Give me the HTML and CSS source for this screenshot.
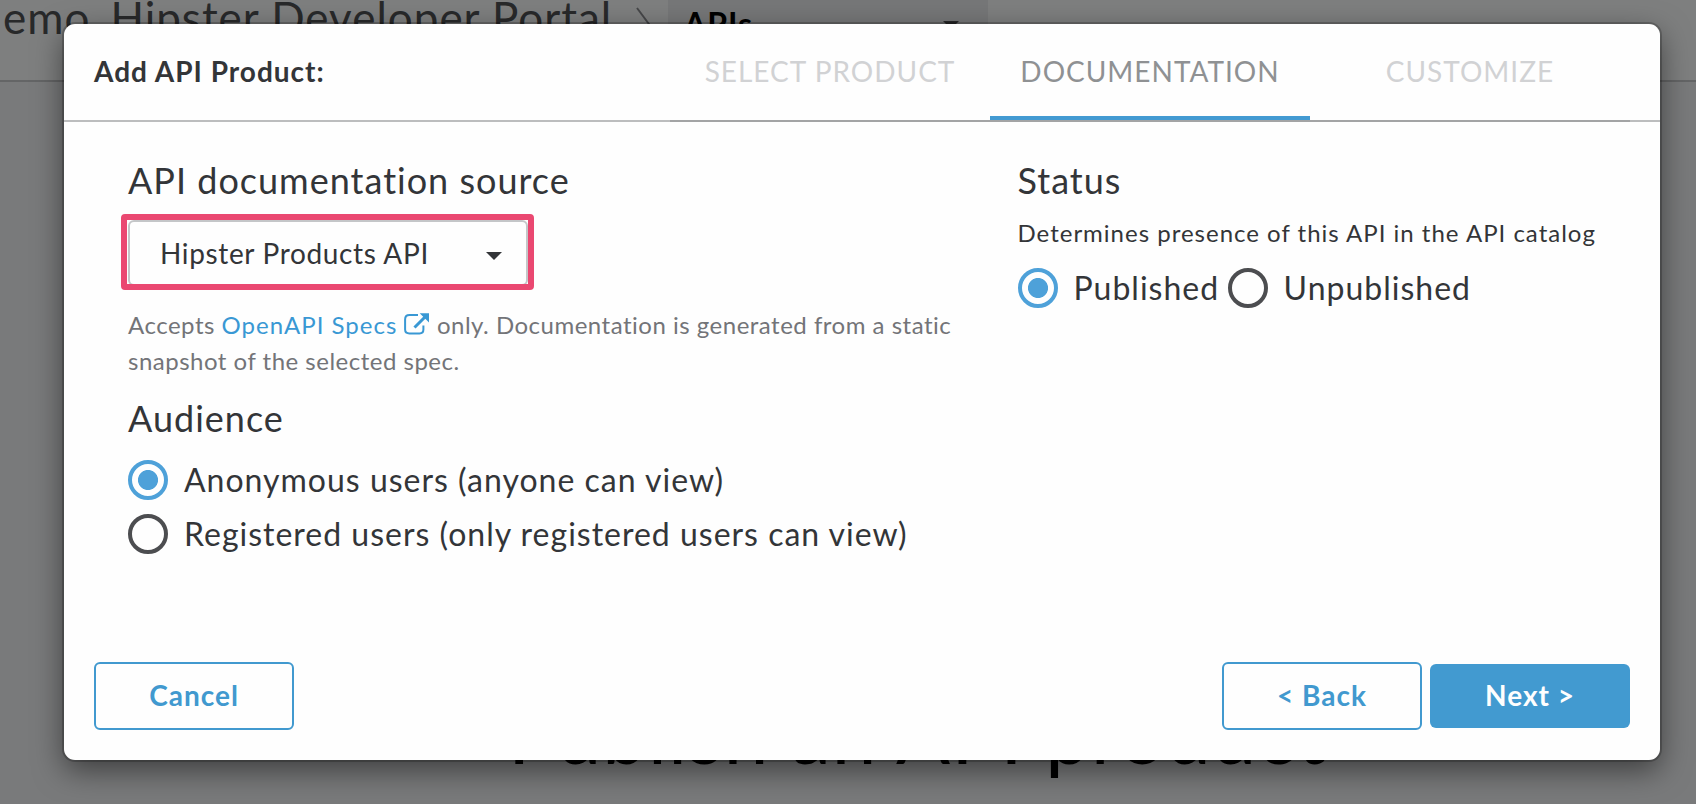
FILE: index.html
```
<!DOCTYPE html>
<html lang="en">
<head>
<meta charset="utf-8">
<title>Add API Product</title>
<link rel="stylesheet" href="styles.css">
</head>
<body>
<div class="page">
  <header class="topbar">
    <div class="crumb"><span>emo</span><span>Hipster Developer Portal</span></div>
    <svg class="crumb-sep" width="16" height="60" viewBox="0 0 16 60"><path d="M1 8 L14 25.500 L1 44" fill="none" stroke="#8d8f92" stroke-width="2"/></svg>
    <div class="section-picker"><span>APIs</span><i class="caret"></i></div>
  </header>
  <main class="content"><h1 class="headline">Publish an API product</h1></main>
</div>
<div class="backdrop">
  <section class="modal">
    <div class="modal-head">
      <h2 class="modal-title">Add API Product:</h2>
      <nav class="tabs">
        <span class="tab">SELECT PRODUCT</span>
        <span class="tab active">DOCUMENTATION</span>
        <span class="tab">CUSTOMIZE</span>
      </nav>
    </div>
    <div class="modal-body">
      <div class="col-main">
        <h3 class="label">API documentation source</h3>
        <div class="select"><span>Hipster Products API</span><i class="caret"></i><div class="highlight"></div></div>
        <p class="help">Accepts <a class="link">OpenAPI Specs<svg class="ext" width="26" height="22" viewBox="0 0 26 22"><path d="M14 2.100H5.500Q1.100 2.100 1.100 6.500V16.500Q1.100 20.400 5.500 20.400H15.500Q19.400 20.400 19.400 16.500V12.500" fill="none" stroke="currentColor" stroke-width="2"/><path d="M10.500 14.500L21 4" fill="none" stroke="currentColor" stroke-width="3"/><path d="M15.700 0.300H25V9.600Z" fill="currentColor"/></svg></a> only. Documentation is generated from a static<br>snapshot of the selected spec.</p>
        <h3 class="label">Audience</h3>
        <div class="radio-list">
          <div class="radio"><i class="dot on"></i><span>Anonymous users (anyone can view)</span></div>
          <div class="radio"><i class="dot"></i><span>Registered users (only registered users can view)</span></div>
        </div>
      </div>
      <div class="col-side">
        <h3 class="label">Status</h3>
        <p class="note">Determines presence of this API in the API catalog</p>
        <div class="radio-row">
          <div class="radio"><i class="dot on"></i><span>Published</span></div>
          <div class="radio"><i class="dot"></i><span>Unpublished</span></div>
        </div>
      </div>
    </div>
    <div class="modal-foot">
      <button class="btn">Cancel</button>
      <div class="foot-right">
        <button class="btn">&lt; Back</button>
        <button class="btn primary">Next &gt;</button>
      </div>
    </div>
  </section>
</div>
</body>
</html>
```
FILE: styles.css
```
* { box-sizing: border-box; }
body {
  margin: 0;
  height: 804px;
  overflow: hidden;
  position: relative;
  font-family: Lato, "Liberation Sans", sans-serif;
  letter-spacing: 1px;
  color: #333538;
}
h1, h2, h3, p { margin: 0; font-weight: 400; }

.page { height: 804px; background: #f3f4f6; overflow: hidden; }
.topbar {
  display: flex;
  height: 82px;
  background: #fdfeff;
  border-bottom: 2px solid #c8cacc;
}
.crumb {
  display: flex;
  gap: 20px;
  width: 636px;
  padding-left: 3px;
  font-size: 44px;
  line-height: 35px;
  white-space: nowrap;
  color: #505255;
}
.crumb-sep { width: 16px; margin-right: 16px; }
.section-picker {
  display: flex;
  justify-content: space-between;
  width: 320px;
  padding: 0 29px 0 16px;
  background: #edeef0;
  color: #000;
  font-size: 32px;
  font-weight: 700;
  line-height: 48px;
}
.section-picker .caret { margin-top: 21px; color: #505255; }
.caret {
  width: 0;
  height: 0;
  border: 8px solid transparent;
  border-top-color: currentColor;
  border-bottom: 0;
}
.content { padding: 603px 0 0 508px; }
.headline { font-size: 80px; line-height: 96px; color: #000; }

.backdrop {
  position: absolute;
  inset: 0;
  padding: 24px 36px 44px 64px;
  background: rgba(0, 0, 0, 0.5);
}
.modal {
  display: flex;
  flex-direction: column;
  height: 736px;
  background: #fefefe;
  border-radius: 11px;
  box-shadow: 0 0 0 2px rgba(0, 0, 0, 0.2), 0 10px 30px rgba(0, 0, 0, 0.5);
}
.modal-head {
  display: flex;
  justify-content: space-between;
  height: 98px;
  padding: 0 30px;
  border-bottom: 2px solid #bcbdbe;
}
.modal-title { font-size: 28px; font-weight: 700; line-height: 94px; }
.tabs {
  display: flex;
  height: 98px;
  border-bottom: 2px solid #a3a4a5;
}
.tab {
  width: 320px;
  font-size: 28px;
  line-height: 94px;
  text-align: center;
  color: #d1d2d4;
}
.tab.active { color: #8f9193; border-bottom: 4px solid #439ad2; }

.modal-body {
  display: flex;
  flex: 1;
  padding: 33px 30px 0 64px;
}
.col-main { width: 889.5px; }
.label { font-size: 36px; line-height: 50px; }
.select {
  position: relative;
  display: flex;
  align-items: center;
  justify-content: space-between;
  width: 400px;
  height: 66px;
  margin: 15px 0 21px;
  padding: 0 24px 0 30px;
  border: 2px solid #c4c6c8;
  border-radius: 6px;
  font-size: 28px;
  letter-spacing: 0.65px;
}
.select .caret { margin-top: 5px; }
.highlight {
  position: absolute;
  left: -9.500px;
  top: -8px;
  width: 413px;
  height: 76px;
  border: 6px solid #ea4871;
  border-radius: 4px;
}
.help {
  margin-bottom: 14px;
  font-size: 24px;
  line-height: 36px;
  letter-spacing: 0.5px;
  white-space: nowrap;
  color: #737478;
}
.link { color: #3998d4; letter-spacing: 1px; }
.ext { margin-left: 7px; vertical-align: -1px; }
.radio-list {
  display: flex;
  flex-direction: column;
  gap: 14px;
  margin-top: 17px;
}
.radio {
  display: flex;
  gap: 16px;
  height: 40px;
  font-size: 32px;
  line-height: 40px;
  white-space: nowrap;
}
.dot {
  width: 40px;
  height: 40px;
  border: 4px solid #4c4d50;
  border-radius: 50%;
}
.dot.on {
  border-color: #4ea1d9;
  background: radial-gradient(circle, #4ea1d9 9.600px, transparent 10.400px);
}
.note { margin-top: 10px; font-size: 24px; line-height: 36px; white-space: nowrap; }
.radio-row { display: flex; gap: 8.5px; margin-top: 17px; }

.modal-foot {
  display: flex;
  justify-content: space-between;
  padding: 0 30px 30px;
}
.foot-right { display: flex; align-items: center; gap: 8px; }
.btn {
  width: 200px;
  height: 68px;
  padding: 0 0 2px;
  border: 2px solid #4199cf;
  border-radius: 6px;
  background: #fefefe;
  color: #4199cf;
  font: 700 28px Lato, "Liberation Sans", sans-serif;
  letter-spacing: 1px;
}
.btn.primary { height: 64px; border: 0; background: #429ad0; color: #fefefe; }
```
